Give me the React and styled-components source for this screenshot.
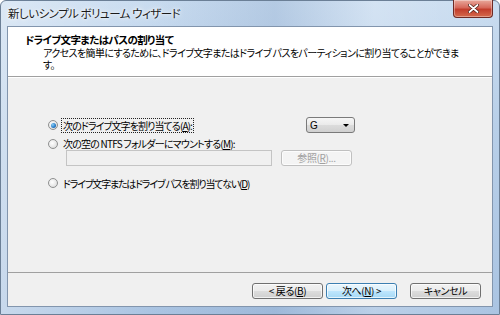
import React from "react";
import styled, { createGlobalStyle } from "styled-components";

const GlobalStyle = createGlobalStyle`
  html, body {
    margin: 0;
    padding: 0;
    background: #fff;
  }
  body {
    font-family: "Noto Sans CJK JP", "Noto Sans", sans-serif;
    font-feature-settings: "palt";
    -webkit-font-smoothing: antialiased;
  }
`;

// ウィンドウ枠 (Aero ガラス)
const Window = styled.div`
  width: 500px;
  height: 315px;
  box-sizing: border-box;
  display: flex;
  flex-direction: column;
  padding: 0 6px 7px 6px;
  border: 1px solid #6b7f96;
  border-radius: 6px 6px 0 0;
  background:
    linear-gradient(90deg, rgba(255,255,255,0.35) 0%, rgba(255,255,255,0) 30%, rgba(120,150,190,0.25) 55%, rgba(255,255,255,0.2) 75%, rgba(255,255,255,0) 100%),
    linear-gradient(180deg, #c9dcf0 0%, #b8cfe8 40%, #aac4e2 100%);
`;

const TitleBar = styled.div`
  height: 25px;
  display: flex;
  justify-content: space-between;
  align-items: flex-start;
`;

const Title = styled.span`
  margin: 4px 0 0 1px;
  font-size: 11.5px;
  letter-spacing: -0.5px;
  line-height: 16px;
  color: #1a1a1a;
  text-shadow: 0 0 6px #fff, 0 0 3px #fff;
`;

const CloseButton = styled.div`
  width: 40px;
  height: 18px;
  margin-top: -1px;
  box-sizing: border-box;
  border: 1px solid #6e2a24;
  border-top: none;
  border-radius: 0 0 4px 4px;
  background: linear-gradient(180deg, #e9a99c 0%, #d6685a 45%, #c23d2c 55%, #d56a4c 100%);
  display: flex;
  align-items: center;
  justify-content: center;
  box-shadow: inset 0 0 0 1px rgba(255,255,255,0.35);
`;

// クライアント領域
const Client = styled.div`
  flex: 1;
  display: flex;
  flex-direction: column;
  border: 1px solid #8295ad;
  background: #f0f0f0;
`;

const Header = styled.div`
  height: 50px;
  box-sizing: border-box;
  background: #fff;
  border-bottom: 1px solid #a0a0a0;
  padding: 6px 0 0 17px;
`;

const HeaderTitle = styled.div`
  font-size: 10.5px;
  font-weight: 700;
  letter-spacing: -0.6px;
  line-height: 14px;
  color: #000;
`;

const HeaderText = styled.div`
  padding-left: 18px;
  font-size: 10px;
  letter-spacing: -0.6px;
  line-height: 12px;
  color: #000;
  white-space: nowrap;
`;

const Body = styled.div`
  flex: 1;
  display: flex;
  flex-direction: column;
  padding: 39px 137px 0 40px;
  border-top: 1px solid #fff;
`;

const Row = styled.div`
  display: flex;
  align-items: center;
  height: ${(p) => p.h || 14}px;
  margin-top: ${(p) => p.mt || 0}px;
`;

const Radio = styled.span`
  width: 10px;
  height: 10px;
  box-sizing: border-box;
  border-radius: 50%;
  border: 1px solid #8e8f8f;
  background: radial-gradient(circle at 40% 40%, #ffffff 0%, #e6e6e6 60%, #cfcfcf 100%);
  display: flex;
  align-items: center;
  justify-content: center;
  flex-shrink: 0;

  &::after {
    content: "";
    display: ${(p) => (p.checked ? "block" : "none")};
    width: 5px;
    height: 5px;
    border-radius: 50%;
    background: radial-gradient(circle at 35% 35%, #8fd0f7 0%, #2a7fc9 55%, #1b4f8f 100%);
  }
`;

const Label = styled.span`
  margin-left: 3px;
  font-size: 10px;
  letter-spacing: ${(p) => p.ls || -0.8}px;
  line-height: 13px;
  color: #000;
  white-space: nowrap;
  padding: 0 1px;
  border: 1px dotted ${(p) => (p.focused ? "#222" : "transparent")};

  u {
    text-decoration: underline;
  }
`;

const Select = styled.div`
  margin-left: auto;
  width: 49px;
  height: 16px;
  box-sizing: border-box;
  border: 1px solid #7a7a7a;
  border-radius: 3px;
  background: linear-gradient(180deg, #f6f6f6 0%, #eaeaea 50%, #dcdcdc 51%, #d0d0d0 100%);
  display: flex;
  align-items: center;
  justify-content: space-between;
  padding: 0 5px 0 3px;
  font-family: "Liberation Sans", sans-serif;
  font-size: 10px;
`;

const Arrow = styled.span`
  width: 0;
  height: 0;
  border-left: 3px solid transparent;
  border-right: 3px solid transparent;
  border-top: 3px solid #000;
`;

const SubRow = styled.div`
  display: flex;
  align-items: center;
  padding-left: 18px;
  height: 16px;
`;

const TextBox = styled.div`
  width: 206px;
  height: 16px;
  box-sizing: border-box;
  border: 1px solid #c4c4c4;
  background: #f0f0f0;
`;

const Button = styled.div`
  width: ${(p) => p.w || 71}px;
  height: 16px;
  box-sizing: border-box;
  margin-left: ${(p) => p.ml || 0}px;
  border: 1px solid ${(p) => (p.disabled ? "#c0c0c0" : p.focused ? "#3c7fb1" : "#707070")};
  border-radius: 3px;
  background: ${(p) =>
    p.disabled
      ? "#f4f4f4"
      : p.focused
      ? "linear-gradient(180deg, #eaf6fd 0%, #d9f0fc 50%, #bee6fd 51%, #a7d9f5 100%)"
      : "linear-gradient(180deg, #f2f2f2 0%, #ebebeb 50%, #dddddd 51%, #cfcfcf 100%)"};
  box-shadow: inset 0 0 0 1px rgba(255,255,255,0.7);
  display: flex;
  align-items: center;
  justify-content: center;
  font-size: 10px;
  letter-spacing: -0.4px;
  line-height: 12px;
  color: ${(p) => (p.disabled ? "#a0a0a0" : "#000")};
  white-space: nowrap;

  u {
    text-decoration: underline;
  }
`;

const Footer = styled.div`
  height: 34px;
  box-sizing: border-box;
  border-top: 1px solid #a0a0a0;
  display: flex;
  justify-content: flex-end;
  padding: 10px 11px 0 0;
`;

const App = () => (
  <>
    <GlobalStyle />
    <Window>
      <TitleBar>
        <Title>新しいシンプル ボリューム ウィザード</Title>
        <CloseButton>
          <svg width="11" height="9" viewBox="0 0 11 9">
            <path d="M1.5 1 L9.5 8 M9.5 1 L1.5 8" stroke="#4a1a12" strokeWidth="3.2" strokeLinecap="round" />
            <path d="M1.5 1 L9.5 8 M9.5 1 L1.5 8" stroke="#fff" strokeWidth="1.8" strokeLinecap="round" />
          </svg>
        </CloseButton>
      </TitleBar>
      <Client>
        <Header>
          <HeaderTitle>ドライブ文字またはパスの割り当て</HeaderTitle>
          <HeaderText>
            アクセスを簡単にするために、ドライブ文字またはドライブ パスをパーティションに割り当てることができま
            <br />
            す。
          </HeaderText>
        </Header>
        <Body>
          <Row h={16}>
            <Radio checked />
            <Label focused ls={-0.9}>
              次のドライブ文字を割り当てる(<u>A</u>):
            </Label>
            <Select>
              G
              <Arrow />
            </Select>
          </Row>
          <Row mt={4} h={13}>
            <Radio />
            <Label ls={-0.8}>
              次の空の NTFS フォルダーにマウントする(<u>M</u>):
            </Label>
          </Row>
          <SubRow>
            <TextBox />
            <Button disabled ml={9}>
              参照(<u>R</u>)...
            </Button>
          </SubRow>
          <Row mt={10} h={14}>
            <Radio />
            <Label ls={-1.2}>
              ドライブ文字またはドライブ パスを割り当てない(<u>D</u>)
            </Label>
          </Row>
        </Body>
        <Footer>
          <Button>
            &lt; 戻る(<u>B</u>)
          </Button>
          <Button focused ml={3}>
            次へ(<u>N</u>) &gt;
          </Button>
          <Button ml={13}>キャンセル</Button>
        </Footer>
      </Client>
    </Window>
  </>
);

export default App;
